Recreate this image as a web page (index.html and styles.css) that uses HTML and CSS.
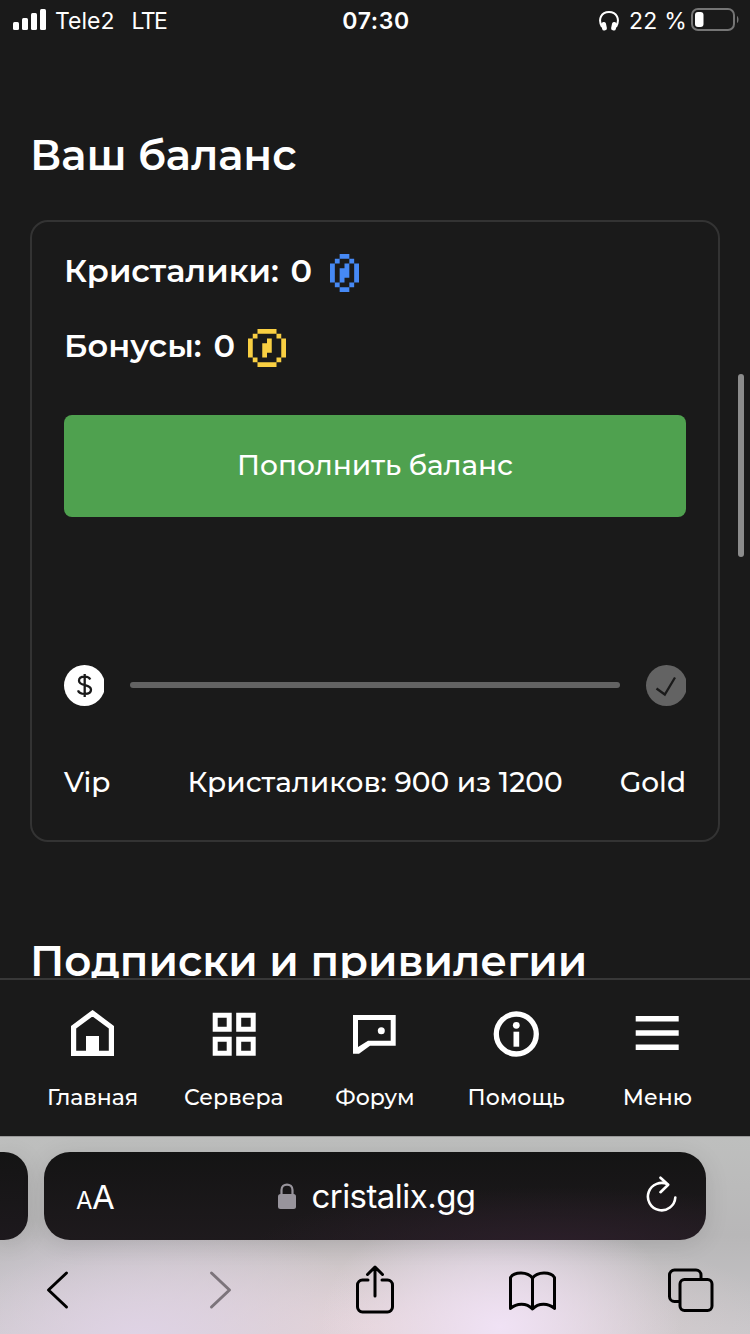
FILE: index.html
```html
<!DOCTYPE html>
<html lang="ru">
<head>
    <meta charset="UTF-8">
    <meta name="viewport" content="width=device-width, initial-scale=1.0">
    <title>Cristalix</title>
    <link rel="stylesheet" href="styles.css">
</head>
<body>
    <div class="status-bar">
        <div class="status-left">
            <svg width="34" height="22" viewBox="0 0 34 22" fill="#fff">
                <rect x="0" y="13" width="6" height="8" rx="1.5"/>
                <rect x="9" y="9" width="6" height="12" rx="1.5"/>
                <rect x="18" y="4" width="6" height="17" rx="1.5"/>
                <rect x="27" y="0" width="6" height="21" rx="1.5"/>
            </svg>
            <span class="carrier">Tele2</span>
            <span class="network">LTE</span>
        </div>
        <div class="status-time">07:30</div>
        <div class="status-right">
            <svg width="20" height="21" viewBox="0 0 20 21">
                <path d="M3 17C-1.500 9 2.500 2 10 2S21.500 9 17 17" fill="none" stroke="#fff" stroke-width="2"/>
                <rect x="2.600" y="12" width="4.800" height="8.500" rx="2" fill="#fff" transform="rotate(-12 5 16)"/>
                <rect x="12.600" y="12" width="4.800" height="8.500" rx="2" fill="#fff" transform="rotate(12 15 16)"/>
            </svg>
            <span class="percent">22 %</span>
            <svg width="48" height="24" viewBox="0 0 48 24">
                <rect x="1" y="1" width="42" height="21" rx="6" fill="none" stroke="#757575" stroke-width="2"/>
                <rect x="4" y="4" width="8.500" height="15" rx="3" fill="#fff"/>
                <path d="M46 8c2 1 2 6 0 7z" fill="#757575"/>
            </svg>
        </div>
    </div>

    <main>
        <h2 class="title-balance">Ваш баланс</h2>
        <div class="card">
            <div class="balance">
                <span>Кристалики: 0</span>
                <svg class="coin-blue" width="29" height="38" viewBox="0 0 6 8" preserveAspectRatio="none" fill="#4689f5">
                    <path d="M2 0h2v1H2zM1 1h1v1H1zM4 1h1v1H4zM0 2h1v4H0zM5 2h1v4H5zM1 6h1v1H1zM4 6h1v1H4zM2 7h2v1H2zM3 2h1v3H3v1H2V3h1z"/>
                </svg>
            </div>
            <div class="balance">
                <span>Бонусы: 0</span>
                <svg class="coin-gold" width="38" height="38" viewBox="0 0 8 8" fill="#f9cf42">
                    <path d="M2 0h4v1H2zM1 1h1v1H1zM6 1h1v1H6zM0 2h1v4H0zM7 2h1v4H7zM1 6h1v1H1zM6 6h1v1H6zM2 7h4v1H2zM4 2h1v3H4v1H3V3h1z"/>
                </svg>
            </div>
            <button class="pay-btn">Пополнить баланс</button>
            <div class="progress">
                <svg width="40" height="41" viewBox="0 0 40 41">
                    <circle cx="20.500" cy="20.500" r="20.500" fill="#fff"/>
                    <path d="M26.200 14.500c-.8-2-2.800-2.800-5.500-2.800-3.300 0-5.700 1.500-5.700 4 0 6 12 3 12 9 0 2.800-2.500 4.200-6.200 4.200-3.300 0-6-1.200-6.800-3.600M20.700 9v23" fill="none" stroke="#1a1a1a" stroke-width="2.300"/>
                </svg>
                <div class="track"></div>
                <svg width="40" height="41" viewBox="0 0 40 41">
                    <circle cx="20.500" cy="20.500" r="20.500" fill="#636363"/>
                    <path d="M10.500 23.500l8.300 6L29 12.500" fill="none" stroke="#1a1a1a" stroke-width="2.300"/>
                </svg>
            </div>
            <div class="levels">
                <span>Vip</span>
                <span>Кристаликов: 900 из 1200</span>
                <span class="next-level">Gold</span>
            </div>
        </div>
        <h2 class="title-subs">Подписки и привилегии</h2>
        <div class="scrollbar"></div>
    </main>

    <nav>
        <a>
            <svg width="48" height="48" viewBox="0 0 48 48">
                <path d="M23.500 3.200L42.400 17.200V43.400H4.600V17.200z" fill="none" stroke="#fff" stroke-width="5.200"/>
                <path d="M17 26h13v18H17z" fill="#fff"/>
            </svg>
            <span>Главная</span>
        </a>
        <a>
            <svg width="48" height="48" viewBox="0 0 48 48" fill="none" stroke="#fff" stroke-width="5">
                <path d="M5.200 5.200h14v14h-14zM28.700 5.200h14.500v14H28.700zM5.200 29.200h14v14h-14zM28.700 29.200h14.500v14H28.700z"/>
            </svg>
            <span>Сервера</span>
        </a>
        <a>
            <svg width="48" height="48" viewBox="0 0 48 48">
                <path d="M2 5H44.700V35.700H19L8 43.700H2zM7 10V37L17 30.700H39.700V10z" fill="#fff" fill-rule="evenodd"/>
                <circle cx="30.300" cy="20.700" r="3.500" fill="#fff"/>
            </svg>
            <span>Форум</span>
        </a>
        <a>
            <svg width="48" height="48" viewBox="0 0 48 48">
                <circle cx="24.300" cy="24" r="20" fill="none" stroke="#fff" stroke-width="5.300"/>
                <circle cx="24.300" cy="15.300" r="3.400" fill="#fff"/>
                <path d="M21.500 21.700h5.700v15h-5.700z" fill="#fff"/>
            </svg>
            <span>Помощь</span>
        </a>
        <a>
            <svg width="48" height="48" viewBox="0 0 48 48" fill="#fff">
                <path d="M2.700 6h43v5.500h-43zM2.700 20.300h43v5.500h-43zM2.700 34.600h43v5.500h-43z"/>
            </svg>
            <span>Меню</span>
        </a>
    </nav>

    <footer>
        <div class="tabs">
            <div class="tab-prev"></div>
            <div class="address">
                <div class="text-size"><small>A</small>A</div>
                <div class="domain">
                    <svg width="18" height="26" viewBox="0 0 18 26">
                        <path d="M3.500 12V7C3.500-.3 14.500-.3 14.500 7v5" fill="none" stroke="#98949c" stroke-width="2.200"/>
                        <rect x="0" y="11" width="18" height="15" rx="2.500" fill="#98949c"/>
                    </svg>
                    <span>cristalix.gg</span>
                </div>
                <svg class="reload" width="32" height="38" viewBox="0 0 32 38" fill="none" stroke="#fff" stroke-width="2.600" stroke-linecap="round" stroke-linejoin="round">
                    <path d="M29.300 21.500A13.700 13.700 0 1 1 22 8.500M14.500 1.700l7.700 7-7.700 7.500"/>
                </svg>
            </div>
        </div>
        <div class="toolbar">
            <svg width="50" height="50" viewBox="0 0 50 50" fill="none" stroke="#000" stroke-width="3" stroke-linecap="round" stroke-linejoin="round">
                <path d="M33.500 8L15.500 25l18 17"/>
            </svg>
            <svg width="50" height="50" viewBox="0 0 50 50" fill="none" stroke="#7c747b" stroke-width="3" stroke-linecap="round" stroke-linejoin="round">
                <path d="M20.500 8l18 17-18 17"/>
            </svg>
            <svg width="50" height="50" viewBox="0 0 50 50" fill="none" stroke="#000" stroke-width="3" stroke-linecap="round" stroke-linejoin="round">
                <path d="M18 15h-5.500a5 5 0 0 0-5 5v22a5 5 0 0 0 5 5h25a5 5 0 0 0 5-5V20a5 5 0 0 0-5-5H32M25 31V2.500M17.500 9.500L25 2l7.500 7.500"/>
            </svg>
            <svg width="50" height="50" viewBox="0 0 50 50" fill="none" stroke="#000" stroke-width="3" stroke-linejoin="round">
                <path d="M24.500 13C19.500 6.500 6.500 6.500 2.500 12.500V43.500C8.500 38 18.500 37.500 24.500 44c6-6.500 16-6 22-.5V12.500C42.500 6.500 29.500 6.500 24.500 13zM24.500 13v31"/>
            </svg>
            <svg width="50" height="50" viewBox="0 0 50 50" fill="none" stroke="#000" stroke-width="3">
                <rect x="14" y="14.500" width="32" height="31" rx="4.500"/>
                <path d="M14 36.500H8.500a5 5 0 0 1-5-5V10a5 5 0 0 1 5-5H30a5 5 0 0 1 5 5v4.500"/>
            </svg>
        </div>
    </footer>
</body>
</html>
```
FILE: styles.css
```css
* {
    box-sizing: border-box;
}
body {
    margin: 0;
    height: 1334px;
    display: flex;
    flex-direction: column;
    overflow: hidden;
    background-color: #1a1a1a;
    color: #fff;
    font-family: Montserrat, Inter, "Noto Sans", sans-serif;
}
span, h2 {
    white-space: nowrap;
}
.status-bar {
    height: 40px;
    padding: 0 11px 0 13px;
    display: grid;
    grid-template-columns: 1fr 72px 1fr;
    align-items: center;
    font-family: Inter, sans-serif;
    font-size: 23px;
}
.status-left, .status-right {
    display: flex;
    align-items: center;
}
.carrier {
    margin-left: 8px;
    padding-top: 2px;
}
.network {
    margin-left: 17px;
    padding-top: 2px;
    letter-spacing: -1.5px;
}
.status-time {
    padding-top: 2px;
    font-weight: 600;
    text-align: center;
    letter-spacing: 0.6px;
}
.status-right {
    justify-content: flex-end;
}
.percent {
    margin: 0 4px 0 10px;
    padding-top: 2px;
    letter-spacing: 0.2px;
}
main {
    position: relative;
    height: 938px;
    padding: 0 30px;
    overflow: hidden;
}
h2 {
    margin: 0;
    font-size: 42px;
    font-weight: 600;
    line-height: 50px;
}
.title-balance {
    padding-top: 90px;
}
.card {
    height: 622px;
    margin-top: 40px;
    padding: 25px 32px 0;
    border: 2px solid #333;
    border-radius: 18px;
}
.balance {
    display: flex;
    align-items: center;
    height: 50px;
    margin-bottom: 25px;
    font-size: 32px;
    font-weight: 600;
    word-spacing: 3px;
}
.balance span {
    padding-bottom: 4px;
}
.balance svg {
    margin-top: 2px;
}
.coin-blue {
    margin-left: 18px;
}
.coin-gold {
    margin-left: 13px;
}
.pay-btn {
    display: block;
    width: 100%;
    height: 102px;
    margin-top: 43px;
    padding: 0 0 2px;
    border: none;
    border-radius: 8px;
    background-color: #4fa14f;
    color: #fff;
    font-family: inherit;
    font-size: 28px;
    font-weight: 500;
}
.progress {
    display: flex;
    align-items: center;
    gap: 26px;
    margin-top: 148px;
}
.track {
    flex: 1;
    height: 6px;
    margin-bottom: 1px;
    border-radius: 3px;
    background-color: #636363;
}
.levels {
    display: grid;
    grid-template-columns: 1fr auto 1fr;
    margin-top: 56px;
    font-size: 28px;
    line-height: 40px;
    font-weight: 500;
}
.next-level {
    text-align: right;
}
.title-subs {
    margin-top: 94px;
}
.scrollbar {
    position: absolute;
    top: 334px;
    right: 6px;
    width: 6px;
    height: 183px;
    border-radius: 3px;
    background-color: #8c8c8c;
}
nav {
    height: 158px;
    padding: 30px 22px 0;
    border-top: 2px solid #383838;
    display: grid;
    grid-template-columns: repeat(5, 1fr);
}
nav a {
    display: flex;
    flex-direction: column;
    align-items: center;
    gap: 26px;
    font-size: 22px;
    font-weight: 500;
    line-height: 28px;
}
footer {
    flex: 1;
    padding-top: 15px;
    border-top: 1px solid #999;
    background:
        radial-gradient(ellipse 180px 130px at 500px 190px, #f0e2f5, transparent),
        radial-gradient(ellipse 240px 130px at 140px 200px, #dfd3e5, transparent),
        radial-gradient(ellipse 420px 110px at 370px 190px, #e4d3d6, transparent),
        linear-gradient(#bebfbe, #b8b7b8 50%, #c9c7ca);
    font-family: Inter, sans-serif;
}
.tabs {
    display: flex;
    gap: 16px;
}
.tab-prev, .address {
    height: 88px;
    background: linear-gradient(#141414, #1d191d);
    box-shadow: 0 4px 24px rgba(0, 0, 0, 0.1);
}
.tab-prev {
    width: 28px;
    border-radius: 0 24px 24px 0;
}
.address {
    width: 662px;
    padding: 0 28px 0 32px;
    border-radius: 26px;
    display: grid;
    grid-template-columns: 1fr auto 1fr;
    align-items: center;
    background: radial-gradient(ellipse 300px 60px at 510px 95px, #2c1f2a, transparent), linear-gradient(#141414, #1e1a1d);
}
.text-size {
    padding-top: 2px;
    font-size: 33px;
    letter-spacing: -0.5px;
}
.text-size small {
    font-size: 24px;
}
.domain {
    display: flex;
    align-items: center;
    gap: 15px;
    font-size: 33px;
    letter-spacing: -0.55px;
}
.reload {
    justify-self: end;
    margin-bottom: 2px;
}
.toolbar {
    display: flex;
    justify-content: space-between;
    padding: 25px 34px 0 33px;
}
```
